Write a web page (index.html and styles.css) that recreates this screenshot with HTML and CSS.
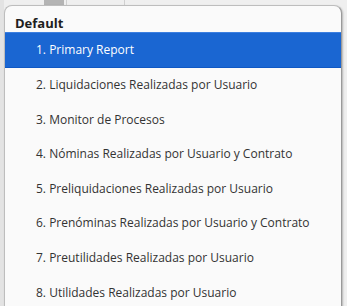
FILE: index.html
```html
<!DOCTYPE html>
<html>
<head>
<meta charset="utf-8">
<link rel="stylesheet" href="styles.css">
</head>
<body>
<div class="backdrop">
  <div class="bg-top"><span class="bg-thumb"></span><span class="bg-line bg-line-a"></span><span class="bg-line bg-line-b"></span></div>
</div>
<div class="menu">
  <div class="group-title">Default</div>
  <ul class="items">
    <li class="item selected">1. Primary Report</li>
    <li class="item">2. Liquidaciones Realizadas por Usuario</li>
    <li class="item">3. Monitor de Procesos</li>
    <li class="item">4. Nóminas Realizadas por Usuario y Contrato</li>
    <li class="item">5. Preliquidaciones Realizadas por Usuario</li>
    <li class="item">6. Prenóminas Realizadas por Usuario y Contrato</li>
    <li class="item">7. Preutilidades Realizadas por Usuario</li>
    <li class="item">8. Utilidades Realizadas por Usuario</li>
  </ul>
</div>
</body>
</html>
```
FILE: styles.css
```css
html, body {
  margin: 0;
  padding: 0;
  width: 347px;
  height: 306px;
  overflow: hidden;
  background: #efefef;
  font-family: "Open Sans", "Noto Sans", sans-serif;
}
.backdrop {
  position: absolute;
  inset: 0;
  background: linear-gradient(to right, #e3e3e3 0 4px, #efefef 4px);
}
.bg-top {
  position: relative;
  height: 6px;
}
.bg-thumb {
  position: absolute;
  left: 44px;
  width: 20px;
  top: 0;
  height: 6px;
  background: #b4b4b4;
}
.bg-line {
  position: absolute;
  top: 0;
  width: 1px;
  height: 6px;
  background: #d0d0d0;
}
.bg-line-a { left: 66px; }
.bg-line-b { left: 124px; }
.menu {
  position: absolute;
  left: 4px;
  top: 5px;
  width: 336px;
  height: 301px;
  background: #fafafa;
  border: 1px solid #bdbdbd;
  border-bottom: none;
  border-right-color: #9a9a9a;
  border-radius: 8px 8px 0 0;
  box-shadow: 1px 1px 2px rgba(0,0,0,0.25);
  overflow: hidden;
}
.group-title {
  font-weight: 700;
  font-size: 13px;
  color: #1e1e1e;
  padding: 9px 0 0 10px;
  height: 17px;
  line-height: 16px;
}
.items {
  list-style: none;
  margin: 0;
  padding: 0;
}
.item {
  height: 34.6px;
  line-height: 34px;
  padding-left: 31px;
  font-size: 12px;
  color: #333;
  white-space: nowrap;
}
.item.selected {
  background: #1a66d2;
  color: #fff;
  border-top: 1px solid #3c7fe0;
  border-bottom: 1px solid #0f58c4;
  height: 34px;
  line-height: 34px;
}
```
